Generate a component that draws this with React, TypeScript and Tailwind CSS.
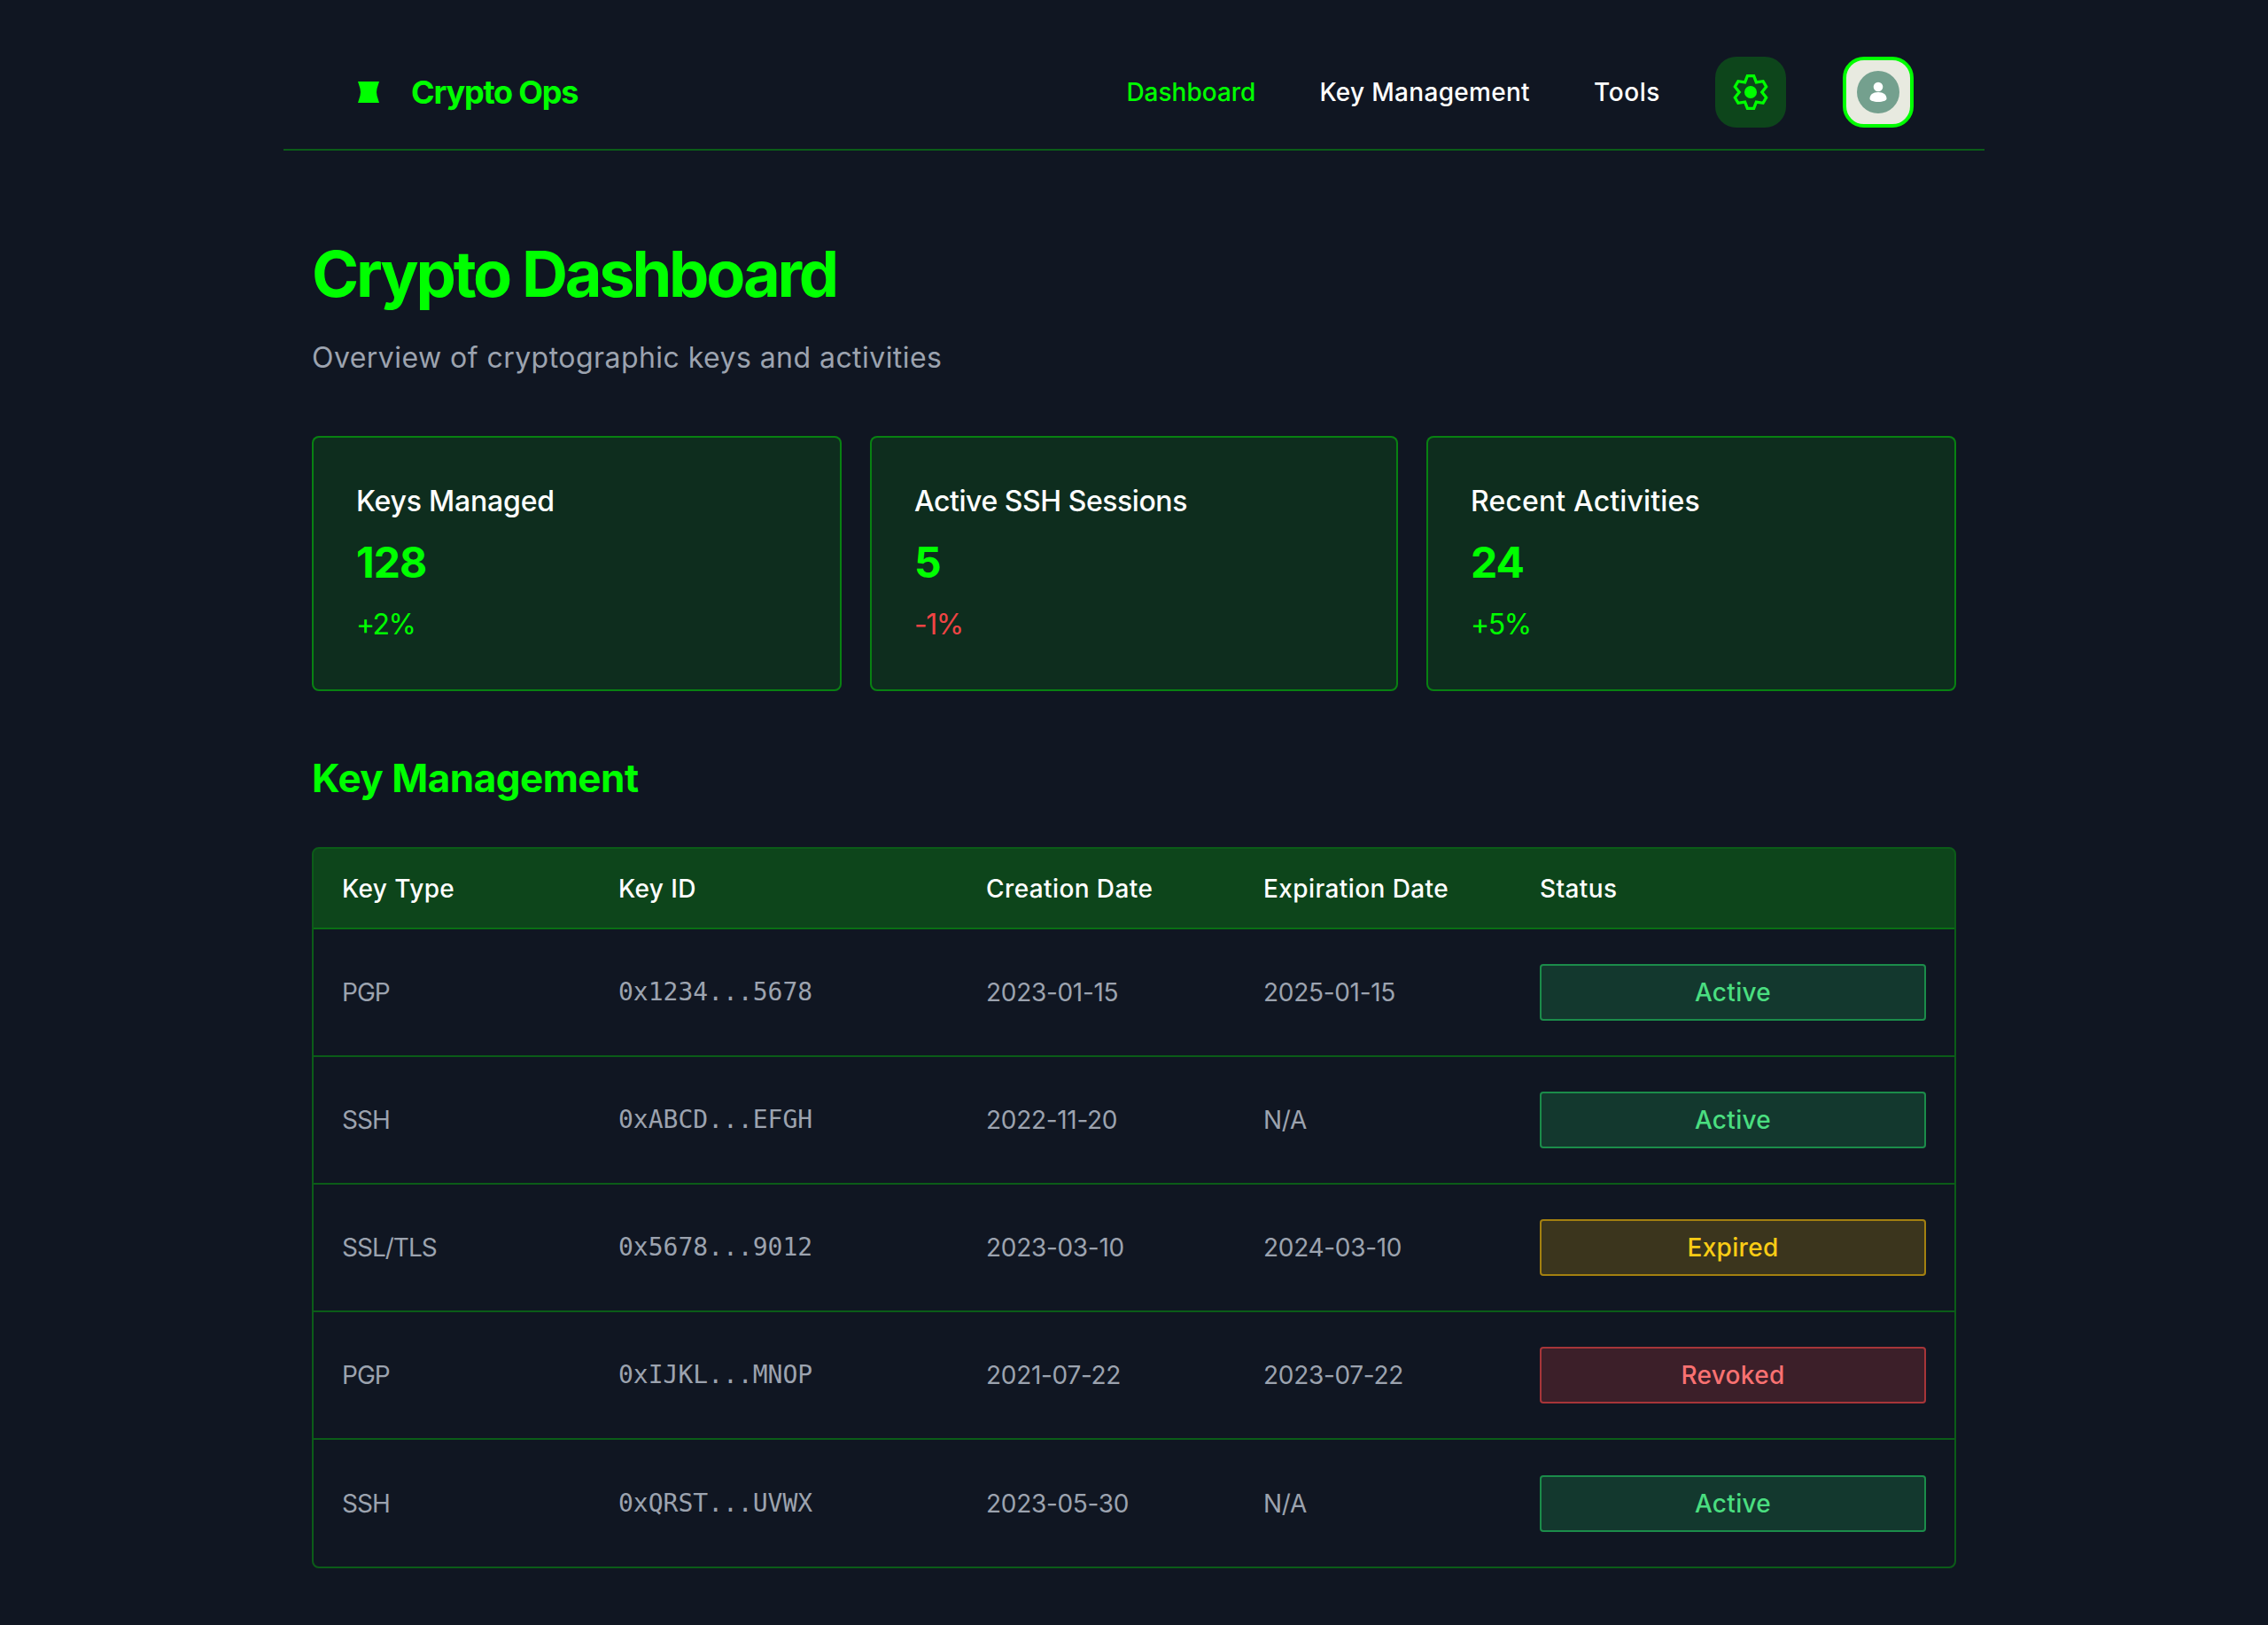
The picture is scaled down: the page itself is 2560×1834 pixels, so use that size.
import React from 'react';

const stats = [
  { label: 'Keys Managed', value: '128', change: '+2%', up: true, labelClass: 'tracking-[-0.2px]' },
  { label: 'Active SSH Sessions', value: '5', change: '-1%', up: false, labelClass: 'tracking-[-0.45px]' },
  { label: 'Recent Activities', value: '24', change: '+5%', up: true, labelClass: 'tracking-[0.15px]' },
];

type Status = 'Active' | 'Expired' | 'Revoked';

const keys: { type: string; id: string; created: string; expires: string; status: Status }[] = [
  { type: 'PGP', id: '0x1234...5678', created: '2023-01-15', expires: '2025-01-15', status: 'Active' },
  { type: 'SSH', id: '0xABCD...EFGH', created: '2022-11-20', expires: 'N/A', status: 'Active' },
  { type: 'SSL/TLS', id: '0x5678...9012', created: '2023-03-10', expires: '2024-03-10', status: 'Expired' },
  { type: 'PGP', id: '0xIJKL...MNOP', created: '2021-07-22', expires: '2023-07-22', status: 'Revoked' },
  { type: 'SSH', id: '0xQRST...UVWX', created: '2023-05-30', expires: 'N/A', status: 'Active' },
];

const statusStyles: Record<Status, string> = {
  Active: 'bg-[#22c55e]/20 text-[#4ade80] border-[#22c55e]/60',
  Expired: 'bg-[#eab308]/20 text-[#facc15] border-[#eab308]/60',
  Revoked: 'bg-[#ef4444]/20 text-[#f87171] border-[#ef4444]/60',
};

function Logo() {
  return (
    <svg viewBox="0 0 24 24" className="w-6 h-6 text-[#00ff00]" fill="currentColor">
      <path d="M0 0H24L21.500 8Q20.500 12 21.500 16L24 24H0L2.500 16Q3.500 12 2.500 8Z" />
    </svg>
  );
}

function Gear() {
  return (
    <svg viewBox="0 0 40 40" className="w-10 h-10 text-[#00ff00]" fill="none" stroke="currentColor" strokeWidth="3.3">
      <path d="M16.400 1.700H23.600L26.400 8.910 34.050 7.730 37.650 13.970 32.800 20 37.650 26.030 34.050 32.270 26.400 31.090 23.600 38.300H16.400L13.600 31.090 5.950 32.270 2.350 26.030 7.200 20 2.350 13.970 5.950 7.730 13.600 8.910Z" />
      <circle cx="20" cy="20" r="7" fill="currentColor" stroke="none" />
    </svg>
  );
}

function Avatar() {
  return (
    <div className="w-12 h-12 rounded-full bg-[#74a08e] flex items-center justify-center">
      <svg viewBox="0 0 24 24" className="w-6 h-6" fill="#fff">
        <circle cx="12" cy="6" r="5.300" />
        <path d="M2.500 19.500c0-4.600 3.500-7.500 9.500-7.500s9.500 2.900 9.500 7.500c0 1.800-4 3.500-9.500 3.500s-9.500-1.700-9.500-3.500Z" />
      </svg>
    </div>
  );
}

export default function App() {
  return (
    <div className="min-h-screen bg-[#101622] font-['Inter','Liberation_Sans',sans-serif] text-white">
      <div className="w-[1920px] mx-auto pt-10">
        <header className="flex items-center justify-between px-20 py-6 border-b-2 border-[#00ff00]/30">
          <div className="flex items-center gap-8">
            <div className="w-8 flex justify-center"><Logo /></div>
            <h1 className="text-[36px] font-bold text-[#00ff00] tracking-[-1.2px] leading-[56px]">Crypto Ops</h1>
          </div>
          <div className="flex items-center gap-16">
            <nav className="flex items-center gap-[72px] text-[28px] font-medium -mr-[2px]">
              <a className="text-[#00ff00]">Dashboard</a>
              <a className="tracking-[0.3px]">Key Management</a>
              <a className="tracking-[0.6px]">Tools</a>
            </nav>
            <button className="w-20 h-20 rounded-3xl bg-[#00ff00]/20 flex items-center justify-center"><Gear /></button>
            <button className="w-20 h-20 rounded-3xl border-4 border-[#00ff00] bg-[#e8eae0] flex items-center justify-center"><Avatar /></button>
          </div>
        </header>

        <main className="p-8 pt-[99px]">
          <h2 className="text-[72px] leading-[80px] font-bold text-[#00ff00] tracking-[-3.2px]">Crypto Dashboard</h2>
          <p className="mt-[31px] text-[32px] leading-[48px] text-[#9ca3af] tracking-[0.45px]">Overview of cryptographic keys and activities</p>

          <div className="grid grid-cols-[598px_596px_598px] gap-8 mt-16">
            {stats.map(s => (
              <div key={s.label} className="rounded-lg border-2 border-[#00ff00]/40 bg-[#00ff00]/10 p-12 h-[288px]">
                <p className={`text-[32px] leading-[48px] font-medium ${s.labelClass}`}>{s.label}</p>
                <p className="text-[48px] leading-[64px] font-bold text-[#00ff00] mt-[13px] tracking-[-1px]">{s.value}</p>
                <p className={`text-[32px] leading-[48px] mt-[14px] tracking-[-1.5px] ${s.up ? 'text-[#00ff00]' : 'text-[#ef4444]'}`}>{s.change}</p>
              </div>
            ))}
          </div>

          <h3 className="text-[44px] leading-[56px] font-bold text-[#00ff00] mt-[70px] tracking-[-0.5px]">Key Management</h3>

          <div className="mt-[50px] rounded-lg border-2 border-[#00ff00]/30 overflow-hidden">
            <table className="w-full table-fixed border-collapse">
              <colgroup>
                <col className="w-[312px]" />
                <col className="w-[415px]" />
                <col className="w-[313px]" />
                <col className="w-[312px]" />
                <col />
              </colgroup>
              <thead className="bg-[#00ff00]/20">
                <tr className="h-[90px] text-left text-[28px] tracking-[0.4px]">
                  <th className="px-8 font-medium">Key Type</th>
                  <th className="px-8 font-medium">Key ID</th>
                  <th className="px-8 font-medium">Creation Date</th>
                  <th className="px-8 font-medium">Expiration Date</th>
                  <th className="px-8 font-medium">Status</th>
                </tr>
              </thead>
              <tbody className="text-[28px] text-[#9ca3af]">
                {keys.map(k => (
                  <tr key={k.id} className="h-[144px] border-t-2 border-[#00ff00]/30">
                    <td className="px-8 tracking-[-1px]">{k.type}</td>
                    <td className="px-8 font-['DejaVu_Sans_Mono',monospace]">{k.id}</td>
                    <td className="px-8 tracking-[-0.3px]">{k.created}</td>
                    <td className="px-8 tracking-[-0.3px]">{k.expires}</td>
                    <td className="px-8">
                      <div className={`h-16 rounded border-2 flex items-center justify-center font-medium tracking-[0.3px] ${statusStyles[k.status]}`}>{k.status}</div>
                    </td>
                  </tr>
                ))}
              </tbody>
            </table>
          </div>
        </main>
      </div>
    </div>
  );
}
